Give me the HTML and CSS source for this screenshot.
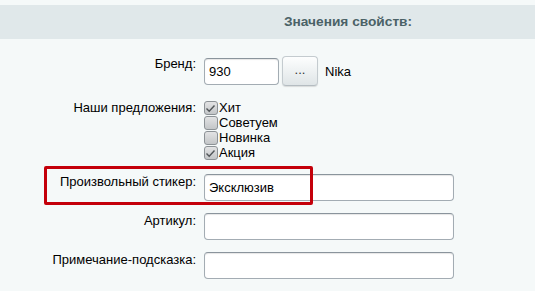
FILE: index.html
```html
<!DOCTYPE html>
<html lang="ru">
<head>
    <meta charset="UTF-8">
    <title>Значения свойств</title>
    <link rel="stylesheet" href="styles.css">
</head>
<body>
<div class="heading">Значения свойств:</div>
<div class="props">
    <div class="row">
        <div class="label">Бренд:</div>
        <div class="value brand">
            <input type="text" class="field short" value="930">
            <button class="pick">...</button>
            <span class="brand-name">Nika</span>
        </div>
    </div>
    <div class="row checks-row">
        <div class="label">Наши предложения:</div>
        <div class="value checks">
            <label class="check"><span class="box on"><svg width="13" height="13" viewBox="0 0 13 13"><path d="M2.5 6.5 L5.2 9.2 L10.5 3.5" fill="none" stroke="#505558" stroke-width="1.4"/></svg></span>Хит</label>
            <label class="check"><span class="box"></span>Советуем</label>
            <label class="check"><span class="box"></span>Новинка</label>
            <label class="check"><span class="box on"><svg width="13" height="13" viewBox="0 0 13 13"><path d="M2.5 6.5 L5.2 9.2 L10.5 3.5" fill="none" stroke="#505558" stroke-width="1.4"/></svg></span>Акция</label>
        </div>
    </div>
    <div class="row marked">
        <div class="label">Произвольный стикер:</div>
        <div class="value"><input type="text" class="field long" value="Эксклюзив"></div>
        <div class="highlight"></div>
    </div>
    <div class="row">
        <div class="label">Артикул:</div>
        <div class="value"><input type="text" class="field long" value=""></div>
    </div>
    <div class="row">
        <div class="label">Примечание-подсказка:</div>
        <div class="value"><input type="text" class="field long" value=""></div>
    </div>
</div>
</body>
</html>
```

FILE: styles.css
```css
* {
    box-sizing: border-box;
}
body {
    margin: 0;
    background-color: #f5f9f9;
    font-family: "Liberation Sans", Arial, sans-serif;
    font-size: 13px;
    color: #000;
    overflow: hidden;
}
.heading {
    margin-top: 5px;
    height: 34px;
    line-height: 34px;
    padding-left: 284px;
    background-color: #e0e8ea;
    color: #4b6267;
    font-size: 13.7px;
    font-weight: bold;
}
.props {
    padding-top: 11px;
}
.row {
    position: relative;
    display: grid;
    grid-template-columns: 196px 1fr;
    column-gap: 8px;
    padding: 6px 0;
}
.checks-row {
    padding: 8px 0;
}
.label {
    text-align: right;
    line-height: 15px;
}
.value {
    display: flex;
    align-items: flex-start;
}
.brand {
    align-items: center;
}
.field {
    height: 27px;
    padding: 0 4px;
    font-family: inherit;
    font-size: 13px;
    color: #000;
    background-color: #fff;
    border: 1px solid #a3acb3;
    border-top-color: #8a949c;
    border-radius: 4px;
    box-shadow: inset 0 1px 1px rgba(0, 0, 0, 0.1);
    outline: none;
}
.short {
    width: 75px;
}
.long {
    width: 250px;
}
.pick {
    width: 36px;
    height: 30px;
    margin-left: 3px;
    padding: 0 0 4px;
    font-family: inherit;
    font-size: 13px;
    color: #333;
    background: linear-gradient(#fdfefe, #dfe5e7);
    border: 1px solid #c4cbcf;
    border-bottom-color: #b4bcc1;
    border-radius: 4px;
    box-shadow: 0 1px 1px rgba(0, 0, 0, 0.12);
}
.brand-name {
    margin-left: 7px;
}
.checks {
    flex-direction: column;
}
.check {
    display: flex;
    align-items: center;
    height: 15px;
}
.box {
    width: 14px;
    height: 14px;
    margin: 0 1px 0 0;
    border: 1px solid #8c9296;
    border-radius: 3px;
    background: linear-gradient(#e2e3e4, #c3c6c8);
    display: flex;
}
.box svg {
    margin: 0 -1px;
}
.highlight {
    position: absolute;
    left: 44px;
    top: -2px;
    width: 269px;
    height: 39px;
    border: 3px solid #c4000a;
    border-radius: 2px;
    pointer-events: none;
}
```
